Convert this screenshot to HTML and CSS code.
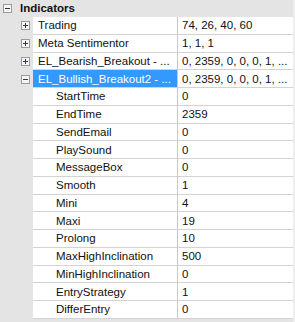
FILE: index.html
```html
<!DOCTYPE html>
<html lang="en">
<head>
    <meta charset="UTF-8">
    <title>Indicators</title>
    <link rel="stylesheet" href="styles.css">
</head>
<body>
    <div class="tree">
        <div class="group">
            <span class="toggle">
                <svg width="9" height="9" viewBox="0 0 9 9"><rect x="0.5" y="0.5" width="8" height="8" fill="#f6f6f6" stroke="#9a9a9a"/><path d="M2 4.5h5" stroke="#333"/></svg>
            </span>
            <span class="group-title">Indicators</span>
        </div>

        <div class="row">
            <span class="gutter"><svg width="9" height="9" viewBox="0 0 9 9"><rect x="0.5" y="0.5" width="8" height="8" fill="#f6f6f6" stroke="#9a9a9a"/><path d="M2 4.5h5M4.5 2v5" stroke="#2a3a5a"/></svg></span>
            <span class="name">Trading</span>
            <span class="value">74, 26, 40, 60</span>
        </div>
        <div class="row">
            <span class="gutter"><svg width="9" height="9" viewBox="0 0 9 9"><rect x="0.5" y="0.5" width="8" height="8" fill="#f6f6f6" stroke="#9a9a9a"/><path d="M2 4.5h5M4.5 2v5" stroke="#2a3a5a"/></svg></span>
            <span class="name">Meta Sentimentor</span>
            <span class="value">1, 1, 1</span>
        </div>
        <div class="row">
            <span class="gutter"><svg width="9" height="9" viewBox="0 0 9 9"><rect x="0.5" y="0.5" width="8" height="8" fill="#f6f6f6" stroke="#9a9a9a"/><path d="M2 4.5h5M4.5 2v5" stroke="#2a3a5a"/></svg></span>
            <span class="name">EL_Bearish_Breakout - ...</span>
            <span class="value">0, 2359, 0, 0, 0, 1, ...</span>
        </div>
        <div class="row">
            <span class="gutter"><svg width="9" height="9" viewBox="0 0 9 9"><rect x="0.5" y="0.5" width="8" height="8" fill="#f6f6f6" stroke="#9a9a9a"/><path d="M2 4.5h5" stroke="#2a3a5a"/></svg></span>
            <span class="name selected">EL_Bullish_Breakout2 - ...</span>
            <span class="value">0, 2359, 0, 0, 0, 1, ...</span>
        </div>

        <div class="row child"><span class="gutter"></span><span class="name">StartTime</span><span class="value">0</span></div>
        <div class="row child"><span class="gutter"></span><span class="name">EndTime</span><span class="value">2359</span></div>
        <div class="row child"><span class="gutter"></span><span class="name">SendEmail</span><span class="value">0</span></div>
        <div class="row child"><span class="gutter"></span><span class="name">PlaySound</span><span class="value">0</span></div>
        <div class="row child"><span class="gutter"></span><span class="name">MessageBox</span><span class="value">0</span></div>
        <div class="row child"><span class="gutter"></span><span class="name">Smooth</span><span class="value">1</span></div>
        <div class="row child"><span class="gutter"></span><span class="name">Mini</span><span class="value">4</span></div>
        <div class="row child"><span class="gutter"></span><span class="name">Maxi</span><span class="value">19</span></div>
        <div class="row child"><span class="gutter"></span><span class="name">Prolong</span><span class="value">10</span></div>
        <div class="row child"><span class="gutter"></span><span class="name">MaxHighInclination</span><span class="value">500</span></div>
        <div class="row child"><span class="gutter"></span><span class="name">MinHighInclination</span><span class="value">0</span></div>
        <div class="row child"><span class="gutter"></span><span class="name">EntryStrategy</span><span class="value">1</span></div>
        <div class="row child"><span class="gutter"></span><span class="name">DifferEntry</span><span class="value">0</span></div>
    </div>
</body>
</html>
```

FILE: styles.css
```css
body {
    margin: 0;
    background-color: #eeeeee;
    font-family: "Liberation Sans", Arial, sans-serif;
    font-size: 11.5px;
    color: #111;
}
.tree {
    width: 293px;
    height: 322px;
    background-color: #e4e4e4;
    overflow: hidden;
}
.group {
    display: flex;
    align-items: center;
    height: 17px;
    box-sizing: border-box;
    padding-bottom: 1px;
}
.toggle {
    display: flex;
    width: 17px;
    padding-left: 3px;
}
.group-title {
    font-weight: bold;
}
.row {
    display: flex;
    height: 17.75px;
}
.gutter {
    display: flex;
    align-items: center;
    width: 33px;
    flex: none;
    padding-left: 21px;
    box-sizing: border-box;
}
.name, .value {
    display: flex;
    align-items: center;
    background-color: white;
    border-bottom: 1px solid #d3d3d3;
    white-space: nowrap;
    overflow: hidden;
}
.name {
    width: 145px;
    flex: none;
    padding-left: 5px;
    box-sizing: border-box;
    border-right: 1px solid #c8c8c8;
}
.child .name {
    padding-left: 23px;
}
.value {
    flex: 1;
    padding-left: 4px;
}
.name.selected {
    background-color: #3399ff;
    color: white;
}
```
